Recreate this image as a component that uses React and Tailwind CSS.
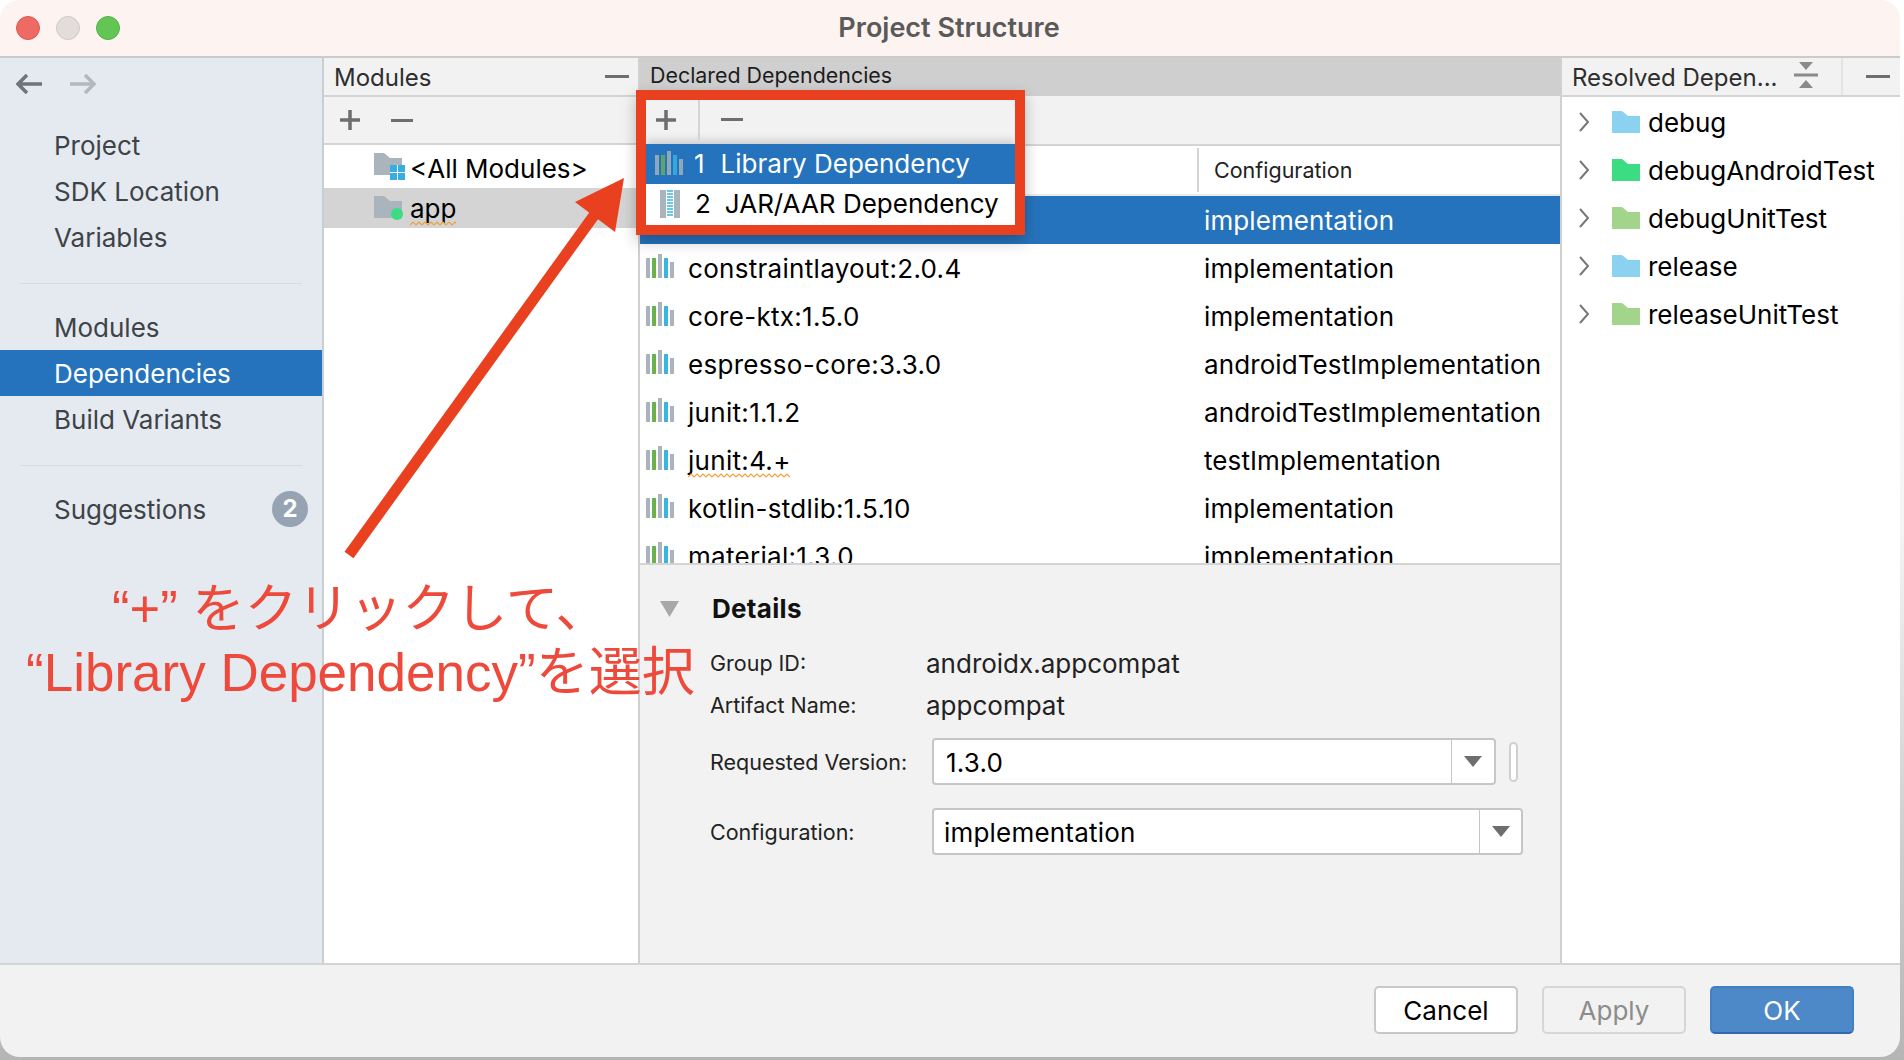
import React from 'react'

const uiFont = 'font-["Inter","Noto_Sans",sans-serif]'

function LibIcon({ className = '' }) {
    return (
        <svg width="28" height="24" viewBox="0 0 28 24" className={className}>
            <rect x="0" y="4" width="4" height="20" fill="#aab4bd" />
            <rect x="6" y="4" width="4" height="20" fill="#6cb24c" />
            <rect x="12" y="0" width="4" height="24" fill="#aab4bd" />
            <rect x="18" y="4" width="4" height="20" fill="#38b6df" />
            <rect x="24" y="8" width="4" height="16" fill="#aab4bd" />
        </svg>
    )
}

function ZipIcon() {
    return (
        <svg width="20" height="28" viewBox="0 0 20 28">
            <rect width="20" height="28" fill="#aab4bd" />
            <rect x="6" y="0" width="8" height="28" fill="#ffffff" />
            <path d="M7 1h6M7 4h6M7 7h6M7 10h6M7 13h6M7 16h6M7 19h6M7 22h6M7 25h6" stroke="#38b6df" strokeWidth="1.6" />
        </svg>
    )
}

function Folder({ color, className = '' }) {
    return (
        <svg width="28" height="22" viewBox="0 0 28 22" className={className}>
            <path d="M0 0H10L16 5H28V22H0Z" fill={color} />
        </svg>
    )
}

function Squiggle({ width, className = '' }) {
    let d = 'M0 4'
    for (let x = 0; x < width; x += 6) d += ` L${x + 3} 1 L${x + 6} 4`
    return (
        <svg width={width} height="5" viewBox={`0 0 ${width} 5`} className={className}>
            <path d={d} fill="none" stroke="#eda33a" strokeWidth="1.2" />
        </svg>
    )
}

function Plus({ className = '' }) {
    return (
        <svg width="22" height="22" viewBox="0 0 22 22" className={className}>
            <path d="M11 1V21M1 11H21" stroke="#6e6e6e" strokeWidth="3.5" />
        </svg>
    )
}

function Minus({ className = '' }) {
    return <div className={`h-[3px] w-[22px] bg-[#6e6e6e] ${className}`} />
}

function Caret({ color = '#6e6e6e', width = 18, height = 11 }) {
    return (
        <svg width={width} height={height} viewBox="0 0 20 16" preserveAspectRatio="none">
            <path d="M0 0H20L10 16Z" fill={color} />
        </svg>
    )
}

function Chevron() {
    return (
        <svg width="12" height="22" viewBox="0 0 12 22" className="-mt-[4px] shrink-0">
            <path d="M2 2L10 11L2 20" fill="none" stroke="#777777" strokeWidth="2" />
        </svg>
    )
}

const deps = [
    { name: 'appcompat:1.3.0', conf: 'implementation', selected: true },
    { name: 'constraintlayout:2.0.4', conf: 'implementation' },
    { name: 'core-ktx:1.5.0', conf: 'implementation' },
    { name: 'espresso-core:3.3.0', conf: 'androidTestImplementation' },
    { name: 'junit:1.1.2', conf: 'androidTestImplementation' },
    { name: 'junit:4.+', conf: 'testImplementation', squiggle: 102 },
    { name: 'kotlin-stdlib:1.5.10', conf: 'implementation' },
    { name: 'material:1.3.0', conf: 'implementation' },
]

const resolved = [
    { name: 'debug', color: '#8ad2ef' },
    { name: 'debugAndroidTest', color: '#3bdc82' },
    { name: 'debugUnitTest', color: '#a2d58b' },
    { name: 'release', color: '#8ad2ef' },
    { name: 'releaseUnitTest', color: '#a2d58b' },
]

function NavItem({ label, active }) {
    return (
        <div className={`flex h-[46px] items-center pl-[54px] text-[26px] ${active ? 'bg-[#2673bd] text-white' : 'text-[#3f4347]'}`}>
            {label}
        </div>
    )
}

function Sidebar() {
    return (
        <aside className="flex w-[324px] shrink-0 flex-col border-r-2 border-[#c9ced3] bg-[#e4eaf0]">
            <div className="flex h-[64px] items-start gap-[28px] pl-[16px] pt-[15px]">
                <svg width="26" height="22" viewBox="0 0 26 22">
                    <path d="M11 2L2 11L11 20M2 11H26" fill="none" stroke="#707478" strokeWidth="3.5" />
                </svg>
                <svg width="26" height="22" viewBox="0 0 26 22">
                    <path d="M15 2L24 11L15 20M24 11H0" fill="none" stroke="#b4b8bb" strokeWidth="3.5" />
                </svg>
            </div>
            <NavItem label="Project" />
            <NavItem label="SDK Location" />
            <NavItem label="Variables" />
            <div className="mx-[20px] mb-[20px] mt-[23px] h-px bg-[#d6dbe0]" />
            <NavItem label="Modules" />
            <NavItem label="Dependencies" active />
            <NavItem label="Build Variants" />
            <div className="mx-[20px] mb-[20px] mt-[23px] h-px bg-[#d6dbe0]" />
            <div className="flex h-[46px] items-center justify-between pl-[54px] pr-[14px] text-[26px] text-[#3f4347]">
                <span>Suggestions</span>
                <span className="flex h-[36px] w-[36px] items-center justify-center rounded-full bg-[#95a3b3] text-[24px] font-bold text-white">2</span>
            </div>
        </aside>
    )
}

function ModulesColumn() {
    return (
        <section className="flex w-[314px] shrink-0 flex-col bg-white">
            <div className="flex h-[37px] shrink-0 items-center justify-between bg-[#f2f2f2] pl-[10px] pr-[9px] text-[24px] text-[#2e2e2e]">
                <span className="pt-[3px]">Modules</span>
                <Minus className="w-[24px]" />
            </div>
            <div className="flex h-[50px] shrink-0 items-center gap-[30px] border-y-2 border-[#d4d4d4] bg-[#f2f2f2] pl-[15px]">
                <Plus />
                <Minus />
            </div>
            <div className="flex h-[43px] items-center pl-[50px]">
                <div className="relative h-[30px] w-[36px]">
                    <Folder color="#aab4bd" className="mt-[1px]" />
                    <div className="absolute left-[16px] top-[13px] grid h-[15px] w-[15px] grid-cols-2 gap-[1px] bg-white">
                        <i className="bg-[#38aee0]" /><i className="bg-[#38aee0]" /><i className="bg-[#38aee0]" /><i className="bg-[#38aee0]" />
                    </div>
                </div>
                <span className="pt-[3px] text-[26px] text-black">&lt;All Modules&gt;</span>
            </div>
            <div className="relative flex h-[40px] items-center bg-[#d4d4d4] pl-[50px]">
                <div className="relative h-[30px] w-[36px]">
                    <Folder color="#aab4bd" className="mt-[3px]" />
                    <div className="absolute left-[17px] top-[15px] h-[12px] w-[12px] rounded-full bg-[#3bdc82]" />
                </div>
                <span className="pt-[1px] text-[26px] text-black">app</span>
                <Squiggle width={46} className="absolute left-[86px] top-[33px]" />
            </div>
        </section>
    )
}

function DepRow({ dep }) {
    return (
        <div className={`relative flex h-[48px] shrink-0 items-center pl-[6px] text-[26px] ${dep.selected ? 'bg-[#2673bd] text-white' : 'text-black'}`}>
            <LibIcon className="-mt-[4px] shrink-0" />
            <span className="ml-[14px] w-[516px] shrink-0 tracking-[0.3px]">{dep.name}</span>
            <span className="tracking-[0.1px]">{dep.conf}</span>
            {dep.squiggle && <Squiggle width={dep.squiggle} className="absolute left-[48px] top-[37px]" />}
        </div>
    )
}

function Select({ value, width, divider, textLeft }) {
    return (
        <div className={`flex h-[47px] items-stretch rounded-[4px] border-2 border-[#c6c6c6] bg-white ${width}`}>
            <div className={`flex flex-1 items-center border-r border-[#c6c6c6] pt-[2px] text-[26px] tracking-[0.2px] text-black ${textLeft}`}>{value}</div>
            <div className={`flex items-center justify-center ${divider}`}>
                <Caret />
            </div>
        </div>
    )
}

function DetailsPanel() {
    return (
        <div className="flex flex-1 flex-col bg-[#f2f2f2] pl-[20px]">
            <div className="flex h-[60px] shrink-0 items-center pt-[27px]">
                <Caret color="#a8a8a8" width={19} height={16} />
                <span className="ml-[33px] text-[26px] font-bold tracking-[0.3px] text-[#111111]">Details</span>
            </div>
            <div className="mt-[18px] flex h-[41px] items-center pl-[50px]">
                <span className="w-[216px] text-[21.5px] text-[#222222]">Group ID:</span>
                <span className="text-[26px] text-[#222222]">androidx.appcompat</span>
            </div>
            <div className="flex h-[42px] items-center pl-[50px]">
                <span className="w-[216px] text-[21.5px] text-[#222222]">Artifact Name:</span>
                <span className="text-[26px] text-[#222222]">appcompat</span>
            </div>
            <div className="mt-[12px] flex items-center pl-[50px]">
                <span className="w-[222px] pt-[2px] text-[21.5px] text-[#222222]">Requested Version:</span>
                <Select value="1.3.0" width="w-[564px]" divider="w-[42px]" textLeft="pl-[12px]" />
                <div className="ml-[13px] h-[40px] w-[9px] rounded-full border-2 border-[#cfcfcf] bg-white" />
            </div>
            <div className="mt-[23px] flex items-center pl-[50px]">
                <span className="w-[222px] pt-[2px] text-[21.5px] text-[#222222]">Configuration:</span>
                <Select value="implementation" width="w-[591px]" divider="w-[41px]" textLeft="pl-[10px]" />
            </div>
        </div>
    )
}

function DependenciesColumn() {
    return (
        <section className="flex w-[924px] shrink-0 flex-col border-x-2 border-[#d0d0d0] bg-white">
            <div className="flex h-[38px] shrink-0 items-center bg-[#cfcfcf] pb-[3px] pl-[10px] text-[21.4px] text-[#1d1d1d]">Declared Dependencies</div>
            <div className="flex h-[50px] shrink-0 items-center border-b-2 border-[#d4d4d4] bg-[#f2f2f2]" />
            <div className="flex h-[50px] shrink-0 items-center border-b-2 border-[#ececec]">
                <div className="ml-[557px] h-[44px] w-[2px] bg-[#d4d4d4]" />
                <span className="ml-[15px] text-[21.5px] text-[#222222]">Configuration</span>
            </div>
            <div className="flex h-[369px] shrink-0 flex-col overflow-hidden border-b-2 border-[#d4d4d4]">
                {deps.map((d) => <DepRow key={d.name} dep={d} />)}
            </div>
            <DetailsPanel />
        </section>
    )
}

function ResolvedTree() {
    return (
        <section className="flex flex-1 flex-col bg-white">
            <div className="flex h-[37px] shrink-0 items-center bg-[#f2f2f2] pl-[10px] text-[24px] text-[#2e2e2e]">
                <span className="w-[222px] whitespace-nowrap pt-[3px]">Resolved Depen...</span>
                <svg width="24" height="26" viewBox="0 0 24 26" className="-mt-[3px] shrink-0">
                    <path d="M5 0H19L12 8ZM5 26H19L12 18Z" fill="#8a8a8a" />
                    <rect x="0" y="11.5" width="24" height="3" fill="#8a8a8a" />
                </svg>
                <div className="ml-[23px] h-full w-[2px] shrink-0 bg-[#e4e4e4]" />
                <Minus className="ml-[23px] w-[24px] shrink-0" />
            </div>
            <div className="h-[2px] shrink-0 bg-[#d4d4d4]" />
            <div className="pt-[3px]">
                {resolved.map((r) => (
                    <div key={r.name} className="flex h-[48px] items-center pl-[16px] text-[26px] text-black">
                        <Chevron />
                        <Folder color={r.color} className="ml-[22px] -mt-[4px]" />
                        <span className="ml-[8px] -mt-[3px]">{r.name}</span>
                    </div>
                ))}
            </div>
        </section>
    )
}

function DialogButton({ label, className }) {
    return (
        <button className={`h-[48px] w-[144px] rounded-[5px] border-2 pt-[1px] text-[26px] ${className}`}>{label}</button>
    )
}

export default function App() {
    return (
        <div className={`relative h-[1060px] w-[1904px] overflow-hidden bg-linear-to-b from-white via-[#f4f4f4] to-[#b5b5b5] ${uiFont}`}>
            <div className="flex h-[1057px] w-[1900px] flex-col overflow-hidden rounded-[20px] bg-[#f2f2f2]">
                <header className="relative flex h-[58px] shrink-0 items-center justify-center border-b-2 border-[#c9cbcd] bg-[#fdf3f1]">
                    <div className="absolute left-[16px] top-[16px] flex gap-[16px]">
                        <i className="h-[24px] w-[24px] rounded-full border border-[#d85b54] bg-[#ee6a62]" />
                        <i className="h-[24px] w-[24px] rounded-full border border-[#cfc9c7] bg-[#e2dcda]" />
                        <i className="h-[24px] w-[24px] rounded-full border border-[#55b24a] bg-[#62c554]" />
                    </div>
                    <span className="ml-[-2px] text-[27px] font-semibold text-[#5a5a5a]">Project Structure</span>
                </header>
                <main className="flex h-[905px] shrink-0">
                    <Sidebar />
                    <ModulesColumn />
                    <DependenciesColumn />
                    <ResolvedTree />
                </main>
                <footer className="flex flex-1 items-start justify-end gap-[24px] border-t-2 border-[#d4d4d4] pr-[46px] pt-[21px]">
                    <DialogButton label="Cancel" className="border-[#c8c8c8] bg-white text-black" />
                    <DialogButton label="Apply" className="border-[#d6d6d6] bg-[#f2f2f2] text-[#8c8c8c]" />
                    <DialogButton label="OK" className="border-[#4180c4] border-b-[#3069b0] bg-[#4d88c9] text-white" />
                </footer>
            </div>

            {/* popup menu and the annotation drawn over the screenshot */}
            <div className="absolute left-[646px] top-[144px] w-[369px] whitespace-nowrap bg-white text-[26px] shadow-[0_-4px_8px_rgba(0,0,0,0.15)]">
                <div className="flex h-[40px] items-center bg-[#2673bd] pb-[2px] pl-[9px] text-white">
                    <LibIcon className="opacity-80" />
                    <span className="ml-[11px]">1</span>
                    <span className="ml-[16px]">Library Dependency</span>
                </div>
                <div className="flex h-[41px] items-center pb-[2px] pl-[14px] text-black">
                    <ZipIcon />
                    <span className="ml-[15px]">2</span>
                    <span className="ml-[14px]">JAR/AAR Dependency</span>
                </div>
            </div>
            <div className="absolute left-[636px] top-[90px] h-[145px] w-[389px] border-[10px] border-[#e9401f] shadow-[0_6px_14px_rgba(0,0,0,0.25)]">
                <div className="absolute left-[9px] top-[9px]"><Plus /></div>
                <div className="absolute left-[52px] top-0 h-[40px] w-[2px] bg-[#d4d4d4]" />
                <div className="absolute left-[75px] top-[18px]"><Minus /></div>
            </div>
            <svg width="300" height="400" viewBox="0 0 300 400" className="absolute left-[340px] top-[170px]">
                <path d="M9 385L255 44" stroke="#e9401f" strokeWidth="11" />
                <path d="M284 8L235 32L275 62Z" fill="#e9401f" />
            </svg>
            <div className="absolute left-[112px] top-[574px] whitespace-nowrap font-['Liberation_Sans','Noto_Sans_CJK_JP',sans-serif] text-[52.5px] leading-[70px] text-[#ee4a3c]">“+” をクリックして、</div>
            <div className="absolute left-[26px] top-[638px] whitespace-nowrap font-['Liberation_Sans','Noto_Sans_CJK_JP',sans-serif] text-[53px] leading-[70px] text-[#ee4a3c]">“Library Dependency”を選択</div>
        </div>
    )
}
